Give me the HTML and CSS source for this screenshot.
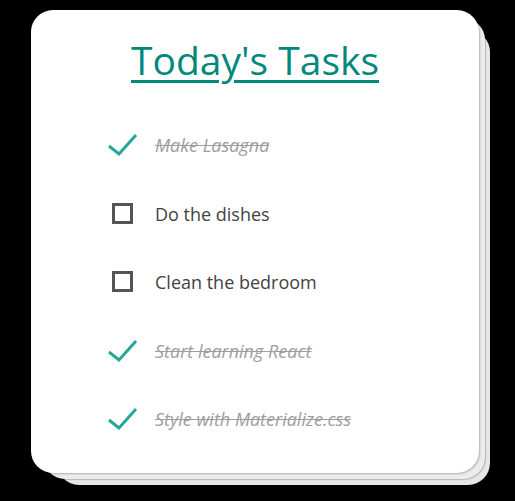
FILE: index.html
```html
<!DOCTYPE html>
<html lang="en">
<head>
    <meta charset="UTF-8">
    <meta name="viewport" content="width=device-width, initial-scale=1.0">
    <title>Today's Tasks</title>
    <link rel="stylesheet" href="styles.css">
</head>
<body>
    <main class="card">
        <h1 class="title"><a href="#">Today's Tasks</a></h1>

        <ul class="task-list">
            <li class="task done">
                <svg class="icon" viewBox="0 0 30 30"><polyline points="1,16 11,24 28,5" /></svg>
                <span>Make Lasagna</span>
            </li>
            <li class="task">
                <svg class="icon" viewBox="0 0 30 30"><rect x="5.5" y="5.5" width="18" height="18" /></svg>
                <span>Do the dishes</span>
            </li>
            <li class="task">
                <svg class="icon" viewBox="0 0 30 30"><rect x="5.5" y="5.5" width="18" height="18" /></svg>
                <span>Clean the bedroom</span>
            </li>
            <li class="task done">
                <svg class="icon" viewBox="0 0 30 30"><polyline points="1,16 11,24 28,5" /></svg>
                <span>Start learning React</span>
            </li>
            <li class="task done">
                <svg class="icon" viewBox="0 0 30 30"><polyline points="1,16 11,24 28,5" /></svg>
                <span>Style with Materialize.css</span>
            </li>
        </ul>
    </main>
</body>
</html>
```
FILE: styles.css
```css
* {
    margin: 0;
    padding: 0;
    box-sizing: border-box;
    font-family: "Open Sans", "Noto Sans", sans-serif;
}

body {
    background-color: #000;
    min-height: 100vh;
    padding: 10px 36px 0 31px;
}

/* stacked paper look */
.card {
    position: relative;
    width: 448px;
    height: 463px;
    background-color: #fff;
    border-radius: 22px;
    box-shadow: 1px 1px 2px rgba(0, 0, 0, 0.25);
    padding-top: 23px;
}

.card::before,
.card::after {
    content: '';
    position: absolute;
    border-radius: 22px;
    background-color: #ececec;
    box-shadow: 1px 1px 1px rgba(0, 0, 0, 0.2);
    z-index: -1;
}

.card::before {
    left: 12px;
    right: -6px;
    top: 8px;
    bottom: -6px;
}

.card::after {
    left: 26px;
    right: -11px;
    top: 20px;
    bottom: -12px;
    z-index: -2;
    background-color: #e6e6e6;
}

.title {
    text-align: center;
    font-size: 39px;
    font-weight: 400;
    line-height: 53px;
}

.title a {
    color: #00897b;
    text-decoration: underline;
    text-decoration-thickness: 3px;
    text-underline-offset: 5px;
}

.task-list {
    list-style: none;
    margin-top: 25px;
    padding-left: 77px;
    display: flex;
    flex-direction: column;
}

.task {
    height: 68.5px;
    display: flex;
    align-items: center;
    gap: 17px;
    font-size: 18px;
    color: #424242;
}

.icon {
    width: 30px;
    height: 30px;
    flex-shrink: 0;
    fill: none;
    stroke: #555;
    stroke-width: 3;
}

.task.done .icon {
    stroke: #26a69a;
}

.task.done span {
    color: #9e9e9e;
    font-style: italic;
    text-decoration: line-through;
}
```
